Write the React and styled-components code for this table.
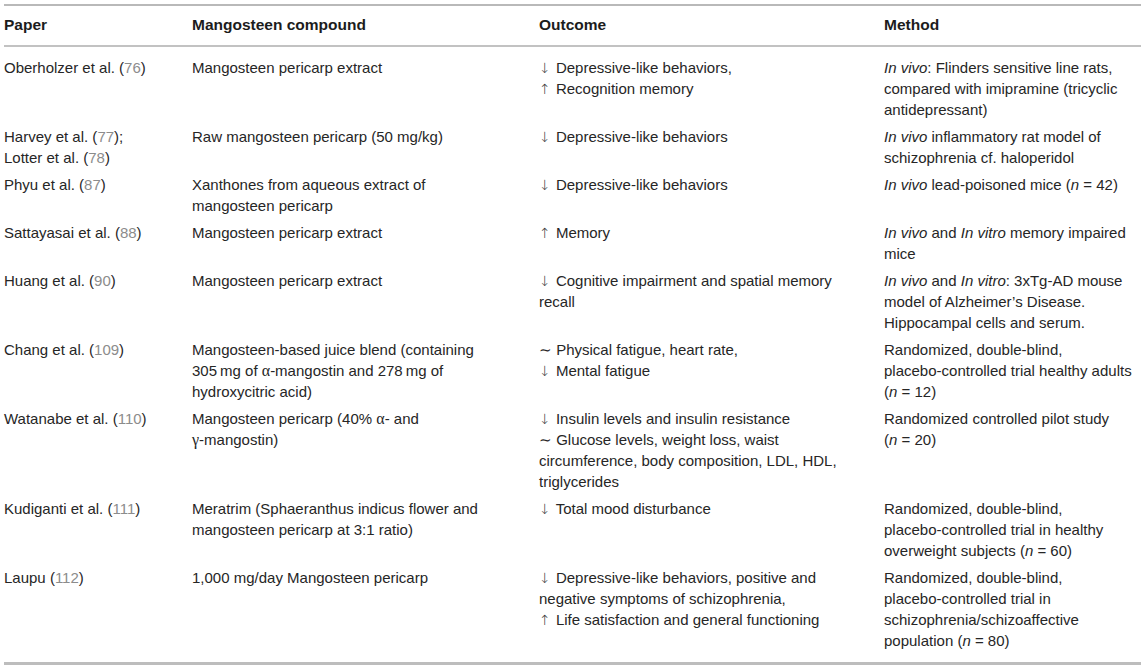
import React from 'react';
import styled, { createGlobalStyle } from 'styled-components';

const GlobalStyle = createGlobalStyle`
  html, body {
    margin: 0;
    padding: 0;
    background: #ffffff;
  }
`;

const Page = styled.div`
  padding: 4px 4px 0 4px;
  font-family: 'Liberation Sans', Arial, Helvetica, sans-serif;
  font-size: 15px;
  line-height: 21px;
  color: #262626;
`;

const Table = styled.table`
  width: 1137px;
  border-collapse: collapse;
  table-layout: fixed;
`;

const HeadRow = styled.tr`
  border-top: 2px solid #b9b9b9;
  border-bottom: 2px solid #c2c2c2;
`;

const HeadCell = styled.th`
  text-align: left;
  font-weight: bold;
  font-size: 15.5px;
  color: #1c1c1c;
  padding: 8px 0 10px 0;
  vertical-align: top;
`;

const Body = styled.tbody`
  border-bottom: 3px solid #bdbdbd;
`;

const Row = styled.tr`
  &:first-child td {
    padding-top: 10px;
  }
  &:last-child td {
    padding-bottom: 11px;
  }
`;

const Cell = styled.td`
  vertical-align: top;
  padding: 3px 0;
`;

const Line = styled.span`
  display: block;
  white-space: nowrap;
  height: 21px;
`;

const Ref = styled.span`
  color: #8c8c8c;
`;

const Greek = styled.span`
  font-family: 'Liberation Serif', 'Times New Roman', serif;
  font-size: 16px;
  line-height: 1;
`;

const Arrow = styled.span`
  font-family: 'DejaVu Sans', sans-serif;
  font-weight: 200;
  font-size: 14px;
  line-height: 1;
  color: #3a3a3a;
  margin-right: 1px;
`;

const Em = styled.i`
  font-style: italic;
`;

const cite = (name, n) => (
  <>
    {name} (<Ref>{n}</Ref>)
  </>
);

const nEq = (v) => (
  <>
    (<Em>n</Em> = {v})
  </>
);

const down = <Arrow>↓</Arrow>;
const up = <Arrow>↑</Arrow>;
const approx = '∼';

const rows = [
  {
    paper: [cite('Oberholzer et al.', 76)],
    compound: ['Mangosteen pericarp extract'],
    outcome: [<>{down} Depressive-like behaviors,</>, <>{up} Recognition memory</>],
    method: [
      <><Em>In vivo</Em>: Flinders sensitive line rats,</>,
      'compared with imipramine (tricyclic',
      'antidepressant)',
    ],
  },
  {
    paper: [<>{cite('Harvey et al.', 77)};</>, cite('Lotter et al.', 78)],
    compound: ['Raw mangosteen pericarp (50 mg/kg)'],
    outcome: [<>{down} Depressive-like behaviors</>],
    method: [
      <><Em>In vivo</Em> inflammatory rat model of</>,
      'schizophrenia cf. haloperidol',
    ],
  },
  {
    paper: [cite('Phyu et al.', 87)],
    compound: ['Xanthones from aqueous extract of', 'mangosteen pericarp'],
    outcome: [<>{down} Depressive-like behaviors</>],
    method: [<><Em>In vivo</Em> lead-poisoned mice {nEq(42)}</>],
  },
  {
    paper: [cite('Sattayasai et al.', 88)],
    compound: ['Mangosteen pericarp extract'],
    outcome: [<>{up} Memory</>],
    method: [
      <><Em>In vivo</Em> and <Em>In vitro</Em> memory impaired</>,
      'mice',
    ],
  },
  {
    paper: [cite('Huang et al.', 90)],
    compound: ['Mangosteen pericarp extract'],
    outcome: [<>{down} Cognitive impairment and spatial memory</>, 'recall'],
    method: [
      <><Em>In vivo</Em> and <Em>In vitro</Em>: 3xTg-AD mouse</>,
      'model of Alzheimer’s Disease.',
      'Hippocampal cells and serum.',
    ],
  },
  {
    paper: [cite('Chang et al.', 109)],
    compound: [
      'Mangosteen-based juice blend (containing',
      <>305{'\u2009'}mg of <Greek>α</Greek>-mangostin and 278{'\u2009'}mg of</>,
      'hydroxycitric acid)',
    ],
    outcome: [<>{approx} Physical fatigue, heart rate,</>, <>{down} Mental fatigue</>],
    method: [
      'Randomized, double-blind,',
      'placebo-controlled trial healthy adults',
      nEq(12),
    ],
  },
  {
    paper: [cite('Watanabe et al.', 110)],
    compound: [
      <>Mangosteen pericarp (40% <Greek>α</Greek>- and</>,
      <><Greek>γ</Greek>-mangostin)</>,
    ],
    outcome: [
      <>{down} Insulin levels and insulin resistance</>,
      <>{approx} Glucose levels, weight loss, waist</>,
      'circumference, body composition, LDL, HDL,',
      'triglycerides',
    ],
    method: ['Randomized controlled pilot study', nEq(20)],
  },
  {
    paper: [cite('Kudiganti et al.', 111)],
    compound: [
      'Meratrim (Sphaeranthus indicus flower and',
      'mangosteen pericarp at 3:1 ratio)',
    ],
    outcome: [<>{down} Total mood disturbance</>],
    method: [
      'Randomized, double-blind,',
      'placebo-controlled trial in healthy',
      <>overweight subjects {nEq(60)}</>,
    ],
  },
  {
    paper: [cite('Laupu', 112)],
    compound: ['1,000 mg/day Mangosteen pericarp'],
    outcome: [
      <>{down} Depressive-like behaviors, positive and</>,
      'negative symptoms of schizophrenia,',
      <>{up} Life satisfaction and general functioning</>,
    ],
    method: [
      'Randomized, double-blind,',
      'placebo-controlled trial in',
      'schizophrenia/schizoaffective',
      <>population {nEq(80)}</>,
    ],
  },
];

const columns = [
  { key: 'paper', label: 'Paper', width: 188 },
  { key: 'compound', label: 'Mangosteen compound', width: 347 },
  { key: 'outcome', label: 'Outcome', width: 345 },
  { key: 'method', label: 'Method', width: 257 },
];

function App() {
  return (
    <Page>
      <GlobalStyle />
      <Table>
        <colgroup>
          {columns.map((c) => (
            <col key={c.key} style={{ width: c.width }} />
          ))}
        </colgroup>
        <thead>
          <HeadRow>
            {columns.map((c) => (
              <HeadCell key={c.key}>{c.label}</HeadCell>
            ))}
          </HeadRow>
        </thead>
        <Body>
          {rows.map((row, i) => (
            <Row key={i}>
              {columns.map((c) => (
                <Cell key={c.key}>
                  {row[c.key].map((line, j) => (
                    <Line key={j}>{line}</Line>
                  ))}
                </Cell>
              ))}
            </Row>
          ))}
        </Body>
      </Table>
    </Page>
  );
}

export default App;
